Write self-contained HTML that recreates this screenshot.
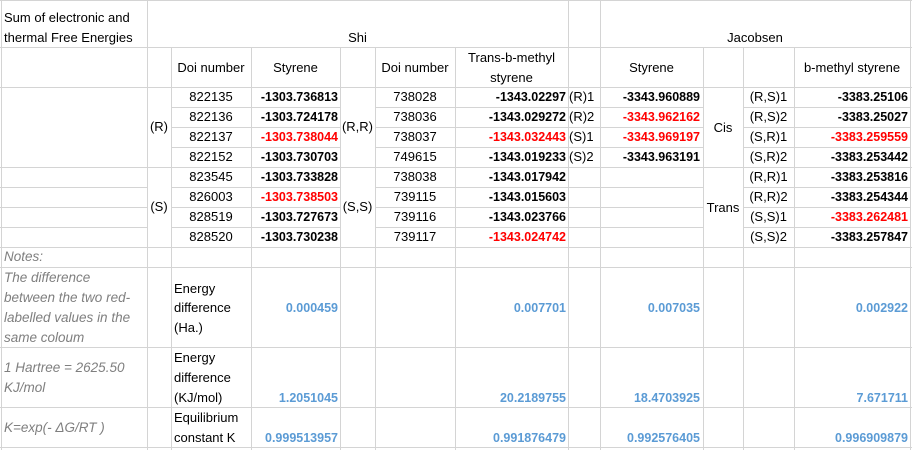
<!DOCTYPE html>
<html><head><meta charset="utf-8"><style>
body{margin:0;width:912px;height:450px;background:#fff;position:relative;overflow:hidden;font-family:"Liberation Sans",Arial,sans-serif;font-size:13px;color:#000}
.v{position:absolute;width:1px;background:#d4d4d4}
.h{position:absolute;height:1px;background:#d4d4d4}
.c{position:absolute;line-height:20px;white-space:nowrap;height:20px}
.r{text-align:right}
.m{text-align:center}
.b{font-weight:bold;font-size:12.5px}
.red{color:#ff0000}
.bl{color:#5b9bd5;font-weight:bold;font-size:12.5px}
.g{color:#7f7f7f;font-style:italic;font-size:13.5px}
</style></head><body>
<div class="v" style="left:1px;top:0;height:450px"></div>
<div class="v" style="left:147px;top:0;height:450px"></div>
<div class="v" style="left:171px;top:47px;height:403px"></div>
<div class="v" style="left:251px;top:47px;height:403px"></div>
<div class="v" style="left:340px;top:47px;height:403px"></div>
<div class="v" style="left:375px;top:47px;height:403px"></div>
<div class="v" style="left:455px;top:47px;height:403px"></div>
<div class="v" style="left:568px;top:0;height:450px"></div>
<div class="v" style="left:600px;top:0;height:450px"></div>
<div class="v" style="left:703px;top:47px;height:403px"></div>
<div class="v" style="left:743px;top:47px;height:403px"></div>
<div class="v" style="left:794px;top:47px;height:403px"></div>
<div class="v" style="left:910px;top:0;height:450px"></div>
<div class="h" style="left:0;top:0;width:912px"></div>
<div class="h" style="left:0;top:47px;width:912px"></div>
<div class="h" style="left:0;top:87px;width:912px"></div>
<div class="h" style="left:171px;top:107px;width:169px"></div><div class="h" style="left:375px;top:107px;width:328px"></div><div class="h" style="left:743px;top:107px;width:168px"></div>
<div class="h" style="left:171px;top:127px;width:169px"></div><div class="h" style="left:375px;top:127px;width:328px"></div><div class="h" style="left:743px;top:127px;width:168px"></div>
<div class="h" style="left:171px;top:147px;width:169px"></div><div class="h" style="left:375px;top:147px;width:328px"></div><div class="h" style="left:743px;top:147px;width:168px"></div>
<div class="h" style="left:0;top:167px;width:912px"></div>
<div class="h" style="left:0;top:187px;width:147px"></div><div class="h" style="left:171px;top:187px;width:169px"></div><div class="h" style="left:375px;top:187px;width:328px"></div><div class="h" style="left:743px;top:187px;width:168px"></div>
<div class="h" style="left:0;top:207px;width:147px"></div><div class="h" style="left:171px;top:207px;width:169px"></div><div class="h" style="left:375px;top:207px;width:328px"></div><div class="h" style="left:743px;top:207px;width:168px"></div>
<div class="h" style="left:0;top:227px;width:147px"></div><div class="h" style="left:171px;top:227px;width:169px"></div><div class="h" style="left:375px;top:227px;width:328px"></div><div class="h" style="left:743px;top:227px;width:168px"></div>
<div class="h" style="left:0;top:247px;width:912px"></div>
<div class="h" style="left:0;top:267px;width:912px"></div>
<div class="h" style="left:0;top:347px;width:912px"></div>
<div class="h" style="left:0;top:407px;width:912px"></div>
<div class="h" style="left:0;top:447px;width:912px"></div>

<div class="c" style="left:4px;top:8px">Sum of electronic and</div>
<div class="c" style="left:4px;top:28px">thermal Free Energies</div>
<div class="c m" style="left:147px;width:421px;top:28px">Shi</div>
<div class="c m" style="left:600px;width:310px;top:28px">Jacobsen</div>
<div class="c m" style="left:171px;width:80px;top:58px">Doi number</div>
<div class="c m" style="left:251px;width:89px;top:58px">Styrene</div>
<div class="c m" style="left:375px;width:80px;top:58px">Doi number</div>
<div class="c m" style="left:455px;width:113px;top:48px">Trans-b-methyl</div>
<div class="c m" style="left:455px;width:113px;top:68px">styrene</div>
<div class="c m" style="left:600px;width:103px;top:58px">Styrene</div>
<div class="c m" style="left:794px;width:116px;top:58px">b-methyl styrene</div>

<div class="c m" style="left:147px;width:24px;top:117px">(R)</div>
<div class="c m" style="left:147px;width:24px;top:197px">(S)</div>
<div class="c m" style="left:340px;width:35px;top:117px">(R,R)</div>
<div class="c m" style="left:340px;width:35px;top:197px">(S,S)</div>
<div class="c m" style="left:703px;width:40px;top:118px">Cis</div>
<div class="c m" style="left:703px;width:40px;top:198px">Trans</div>

<div class="c m" style="left:171px;width:80px;top:87px">822135</div><div class="c r b" style="left:251px;width:87px;top:87px">-1303.736813</div><div class="c m" style="left:375px;width:80px;top:87px">738028</div><div class="c r b" style="left:455px;width:111px;top:87px">-1343.02297</div><div class="c" style="left:569px;top:87px">(R)1</div><div class="c r b" style="left:600px;width:100px;top:87px">-3343.960889</div><div class="c m" style="left:743px;width:51px;top:87px">(R,S)1</div><div class="c r b" style="left:794px;width:114px;top:87px">-3383.25106</div>
<div class="c m" style="left:171px;width:80px;top:107px">822136</div><div class="c r b" style="left:251px;width:87px;top:107px">-1303.724178</div><div class="c m" style="left:375px;width:80px;top:107px">738036</div><div class="c r b" style="left:455px;width:111px;top:107px">-1343.029272</div><div class="c" style="left:569px;top:107px">(R)2</div><div class="c r b red" style="left:600px;width:100px;top:107px">-3343.962162</div><div class="c m" style="left:743px;width:51px;top:107px">(R,S)2</div><div class="c r b" style="left:794px;width:114px;top:107px">-3383.25027</div>
<div class="c m" style="left:171px;width:80px;top:127px">822137</div><div class="c r b red" style="left:251px;width:87px;top:127px">-1303.738044</div><div class="c m" style="left:375px;width:80px;top:127px">738037</div><div class="c r b red" style="left:455px;width:111px;top:127px">-1343.032443</div><div class="c" style="left:569px;top:127px">(S)1</div><div class="c r b red" style="left:600px;width:100px;top:127px">-3343.969197</div><div class="c m" style="left:743px;width:51px;top:127px">(S,R)1</div><div class="c r b red" style="left:794px;width:114px;top:127px">-3383.259559</div>
<div class="c m" style="left:171px;width:80px;top:147px">822152</div><div class="c r b" style="left:251px;width:87px;top:147px">-1303.730703</div><div class="c m" style="left:375px;width:80px;top:147px">749615</div><div class="c r b" style="left:455px;width:111px;top:147px">-1343.019233</div><div class="c" style="left:569px;top:147px">(S)2</div><div class="c r b" style="left:600px;width:100px;top:147px">-3343.963191</div><div class="c m" style="left:743px;width:51px;top:147px">(S,R)2</div><div class="c r b" style="left:794px;width:114px;top:147px">-3383.253442</div>
<div class="c m" style="left:171px;width:80px;top:167px">823545</div><div class="c r b" style="left:251px;width:87px;top:167px">-1303.733828</div><div class="c m" style="left:375px;width:80px;top:167px">738038</div><div class="c r b" style="left:455px;width:111px;top:167px">-1343.017942</div><div class="c m" style="left:743px;width:51px;top:167px">(R,R)1</div><div class="c r b" style="left:794px;width:114px;top:167px">-3383.253816</div>
<div class="c m" style="left:171px;width:80px;top:187px">826003</div><div class="c r b red" style="left:251px;width:87px;top:187px">-1303.738503</div><div class="c m" style="left:375px;width:80px;top:187px">739115</div><div class="c r b" style="left:455px;width:111px;top:187px">-1343.015603</div><div class="c m" style="left:743px;width:51px;top:187px">(R,R)2</div><div class="c r b" style="left:794px;width:114px;top:187px">-3383.254344</div>
<div class="c m" style="left:171px;width:80px;top:207px">828519</div><div class="c r b" style="left:251px;width:87px;top:207px">-1303.727673</div><div class="c m" style="left:375px;width:80px;top:207px">739116</div><div class="c r b" style="left:455px;width:111px;top:207px">-1343.023766</div><div class="c m" style="left:743px;width:51px;top:207px">(S,S)1</div><div class="c r b red" style="left:794px;width:114px;top:207px">-3383.262481</div>
<div class="c m" style="left:171px;width:80px;top:227px">828520</div><div class="c r b" style="left:251px;width:87px;top:227px">-1303.730238</div><div class="c m" style="left:375px;width:80px;top:227px">739117</div><div class="c r b red" style="left:455px;width:111px;top:227px">-1343.024742</div><div class="c m" style="left:743px;width:51px;top:227px">(S,S)2</div><div class="c r b" style="left:794px;width:114px;top:227px">-3383.257847</div>

<div class="c g" style="left:4px;top:247px">Notes:</div>
<div class="c g" style="left:4px;top:268px">The difference</div>
<div class="c g" style="left:4px;top:288px">between the two red-</div>
<div class="c g" style="left:4px;top:308px">labelled values in the</div>
<div class="c g" style="left:4px;top:328px">same coloum</div>
<div class="c" style="left:174px;top:279px">Energy</div>
<div class="c" style="left:174px;top:298px">difference</div>
<div class="c" style="left:174px;top:318px">(Ha.)</div>
<div class="c r bl" style="left:251px;width:87px;top:298px">0.000459</div>
<div class="c r bl" style="left:455px;width:111px;top:298px">0.007701</div>
<div class="c r bl" style="left:600px;width:100px;top:298px">0.007035</div>
<div class="c r bl" style="left:794px;width:114px;top:298px">0.002922</div>

<div class="c g" style="left:4px;top:358px">1 Hartree = 2625.50</div>
<div class="c g" style="left:4px;top:378px">KJ/mol</div>
<div class="c" style="left:174px;top:348px">Energy</div>
<div class="c" style="left:174px;top:368px">difference</div>
<div class="c" style="left:174px;top:388px">(KJ/mol)</div>
<div class="c r bl" style="left:251px;width:87px;top:388px">1.2051045</div>
<div class="c r bl" style="left:455px;width:111px;top:388px">20.2189755</div>
<div class="c r bl" style="left:600px;width:100px;top:388px">18.4703925</div>
<div class="c r bl" style="left:794px;width:114px;top:388px">7.671711</div>

<div class="c g" style="left:4px;top:418px">K=exp(- ΔG/RT )</div>
<div class="c" style="left:174px;top:408px">Equilibrium</div>
<div class="c" style="left:174px;top:428px">constant K</div>
<div class="c r bl" style="left:251px;width:87px;top:428px">0.999513957</div>
<div class="c r bl" style="left:455px;width:111px;top:428px">0.991876479</div>
<div class="c r bl" style="left:600px;width:100px;top:428px">0.992576405</div>
<div class="c r bl" style="left:794px;width:114px;top:428px">0.996909879</div>
</body></html>
